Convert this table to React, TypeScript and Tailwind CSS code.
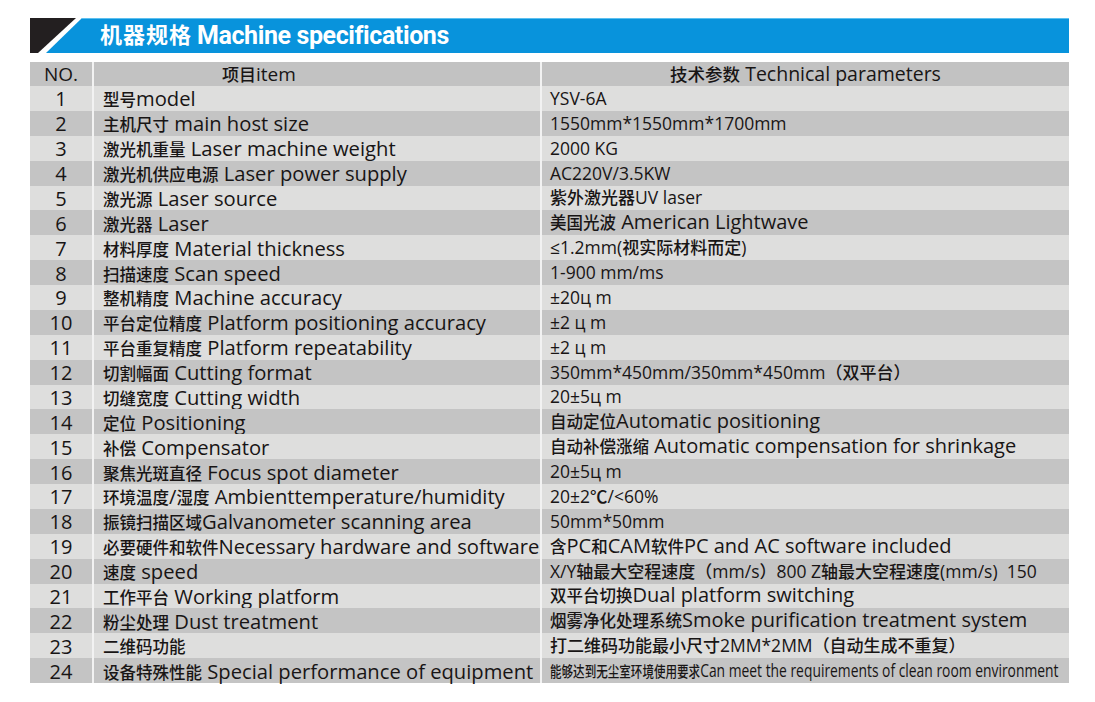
const rows: [string, string, string, string?][] = [
  ["1", "型号model", "YSV-6A"],
  ["2", "主机尺寸 main host size", "1550mm*1550mm*1700mm"],
  ["3", "激光机重量 Laser machine weight", "2000 KG"],
  ["4", "激光机供应电源 Laser power supply", "AC220V/3.5KW"],
  ["5", "激光源 Laser source", "紫外激光器UV laser"],
  ["6", "激光器 Laser", "美国光波 American Lightwave", "lg"],
  ["7", "材料厚度 Material thickness", "≤1.2mm(视实际材料而定)"],
  ["8", "扫描速度 Scan speed", "1-900 mm/ms"],
  ["9", "整机精度 Machine accuracy", "±20ц m"],
  ["10", "平台定位精度 Platform positioning accuracy", "±2 ц m"],
  ["11", "平台重复精度 Platform repeatability", "±2 ц m"],
  ["12", "切割幅面 Cutting format", "350mm*450mm/350mm*450mm（双平台）"],
  ["13", "切缝宽度 Cutting width", "20±5ц m"],
  ["14", "定位 Positioning", "自动定位Automatic positioning", "lg"],
  ["15", "补偿 Compensator", "自动补偿涨缩 Automatic compensation for shrinkage", "lg"],
  ["16", "聚焦光斑直径 Focus spot diameter", "20±5ц m"],
  ["17", "环境温度/湿度 Ambienttemperature/humidity", "20±2℃/<60%"],
  ["18", "振镜扫描区域Galvanometer scanning area", "50mm*50mm"],
  ["19", "必要硬件和软件Necessary hardware and software", "含PC和CAM软件PC and AC software included", "lg"],
  ["20", "速度 speed", "X/Y轴最大空程速度（mm/s）800 Z轴最大空程速度(mm/s)  150"],
  ["21", "工作平台 Working platform", "双平台切换Dual platform switching", "lg"],
  ["22", "粉尘处理 Dust treatment", "烟雾净化处理系统Smoke purification treatment system", "lg"],
  ["23", "二维码功能", "打二维码功能最小尺寸2MM*2MM（自动生成不重复）"],
  ["24", "设备特殊性能 Special performance of equipment", "能够达到无尘室环境使用要求Can meet the requirements of clean room environment", "narrow"],
]

const cjk = /([\u3000-\u303f\u4e00-\u9fff\uff00-\uffef]+)/

function Mixed({ text, en, cn }: { text: string; en: string; cn: string }) {
  return (
    <span className="whitespace-pre leading-[22px]">
      {text.split(cjk).filter(Boolean).map((part, i) =>
        cjk.test(part) ? (
          <span key={i} className={cn}>{part}</span>
        ) : (
          <span key={i} className={en}>{part}</span>
        )
      )}
    </span>
  )
}

function Param({ text, size }: { text: string; size?: string }) {
  if (size === "narrow") {
    return (
      <span className="inline-block origin-left scale-x-[0.77] whitespace-nowrap leading-[22px]">
        <Mixed text={text} en="text-[18px] leading-[22px]" cn="text-[15px] font-medium leading-[22px]" />
      </span>
    )
  }
  if (size === "lg") {
    return <Mixed text={text} en="text-[20px] leading-[22px]" cn="text-[16.5px] font-medium leading-[22px]" />
  }
  return <Mixed text={text} en="text-[17.5px] leading-[22px]" cn="text-[17px] font-medium leading-[22px]" />
}

export default function App() {
  return (
    <div className="w-[1095px] h-[702px] bg-white pt-[18px] px-[30px] text-[#181515] font-medium leading-[22px] [font-family:'Open_Sans','Noto_Sans_CJK_SC',sans-serif]">
      <div className="flex h-[35px] w-[1039px]">
        <svg width="52" height="35" viewBox="0 0 52 35" className="shrink-0">
          <polygon points="0,0 46,0 8,35 0,35" fill="#231f20" />
          <polygon points="52,0 52,35 16,35" fill="#0893dc" />
        </svg>
        <div className="flex-1 bg-[#0893dc] border-t border-[#5cc0f0] flex items-center pl-[18px] text-white font-bold leading-[28px] [font-family:'Roboto','Noto_Sans_CJK_SC',sans-serif]">
          <span className="text-[22px] leading-[28px] tracking-[1px]">机器规格</span>
          <span className="text-[25px] leading-[28px] ml-[5px] tracking-[-0.4px]">Machine specifications</span>
        </div>
      </div>

      <div className="mt-[9px] grid grid-cols-[62px_446px_527px] gap-x-[2px] bg-[#f2f2f2] w-[1039px] grid-rows-[24px_repeat(24,minmax(0,1fr))] h-[621px]">
        <div className="bg-[#c2c2c2] flex items-center justify-center text-[19px] leading-[22px]">NO.</div>
        <div className="bg-[#c2c2c2] flex items-center pl-[128px]">
          <Mixed text="项目item" en="text-[19px] leading-[22px]" cn="text-[17px] leading-[22px]" />
        </div>
        <div className="bg-[#c2c2c2] flex items-center justify-center">
          <Mixed text="技术参数 Technical parameters" en="text-[19.5px] leading-[22px]" cn="text-[17.5px] leading-[22px]" />
        </div>
        {rows.map(([no, item, param, size]) => {
          const bg = Number(no) % 2 === 1 ? "bg-[#dededd]" : "bg-[#c4c4c4]"
          return (
            <div key={no} className="contents">
              <div className={`${bg} flex items-center justify-center text-[20px] leading-[22px] pt-[2px]`}>{no}</div>
              <div className={`${bg} flex items-center pl-[9px] pt-[2px] whitespace-nowrap`}>
                <Mixed text={item} en="text-[20.2px] leading-[22px]" cn="text-[16.5px] leading-[22px]" />
              </div>
              <div className={`${bg} flex items-center pl-[8px] whitespace-nowrap`}>
                <Param text={param} size={size} />
              </div>
            </div>
          )
        })}
      </div>
    </div>
  )
}
